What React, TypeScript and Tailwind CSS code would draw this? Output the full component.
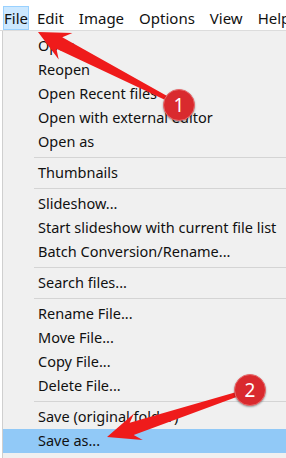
import React from "react";

type Entry = { label: string; active?: boolean } | "sep";

const entries: Entry[] = [
  { label: "Open" },
  { label: "Reopen" },
  { label: "Open Recent files" },
  { label: "Open with external editor" },
  { label: "Open as" },
  "sep",
  { label: "Thumbnails" },
  "sep",
  { label: "Slideshow..." },
  { label: "Start slideshow with current file list" },
  { label: "Batch Conversion/Rename..." },
  "sep",
  { label: "Search files..." },
  "sep",
  { label: "Rename File..." },
  { label: "Move File..." },
  { label: "Copy File..." },
  { label: "Delete File..." },
  "sep",
  { label: "Save (original folder)" },
  { label: "Save as...", active: true },
];

const topMenus = ["Edit", "Image", "Options", "View", "Help"];

// arrow: tip, tail, head length, head half width, shaft half widths
function arrowPoints(
  tip: [number, number],
  tail: [number, number],
  headLen: number,
  headHalf: number,
  neckHalf: number,
  tailHalf: number
) {
  const dx = tail[0] - tip[0];
  const dy = tail[1] - tip[1];
  const len = Math.hypot(dx, dy);
  const ux = dx / len;
  const uy = dy / len;
  const px = -uy;
  const py = ux;
  const bx = tip[0] + ux * headLen;
  const by = tip[1] + uy * headLen;
  const nx = tip[0] + ux * (headLen - 7);
  const ny = tip[1] + uy * (headLen - 7);
  const pts = [
    [tip[0], tip[1]],
    [bx + px * headHalf, by + py * headHalf],
    [nx + px * neckHalf, ny + py * neckHalf],
    [tail[0] + px * tailHalf, tail[1] + py * tailHalf],
    [tail[0] - px * tailHalf, tail[1] - py * tailHalf],
    [nx - px * neckHalf, ny - py * neckHalf],
    [bx - px * headHalf, by - py * headHalf],
  ];
  return pts.map((p) => `${p[0].toFixed(1)},${p[1].toFixed(1)}`).join(" ");
}

const Badge = ({ n }: { n: number }) => (
  <div className="w-[32px] h-[32px] rounded-full bg-[#d92a2e] border border-[#e86a6c] shadow-[0_1px_2px_rgba(0,0,0,0.35)] flex items-center justify-center text-white text-[19px] leading-none font-['Noto_Sans',sans-serif]">
    {n}
  </div>
);

export default function App() {
  return (
    <div className="relative w-[286px] h-[458px] overflow-hidden bg-white font-['Noto_Sans',sans-serif] text-[#111]">
      <div className="h-[6px] bg-white" />
      <div className="flex items-stretch h-[25px] border-b border-[#dcdcdc] text-[15px]">
        <div className="ml-[3px] w-[34px] border border-[#99d1ff] bg-[#cce8ff] flex items-center justify-center">
          File
        </div>
        <div className="flex items-center gap-[15px] pl-[8px]">
          {topMenus.map((m) => (
            <span key={m} className="whitespace-nowrap">
              {m}
            </span>
          ))}
        </div>
      </div>
      <div className="ml-[2px] border-l border-[#cfcfcf] bg-[#f0f0f0] pt-[3px] h-[427px] text-[14.5px]">
        {entries.map((e, i) =>
          e === "sep" ? (
            <div key={i} className="h-[7px] flex items-center pl-[31px]">
              <div className="h-px w-full bg-[#d4d4d4]" />
            </div>
          ) : (
            <div
              key={i}
              className={`h-[24px] flex items-center pl-[35px] whitespace-nowrap ${
                e.active ? "bg-[#91c9f7]" : ""
              }`}
            >
              {e.label}
            </div>
          )
        )}
      </div>

      <svg
        className="absolute inset-0 pointer-events-none"
        width="286"
        height="458"
        viewBox="0 0 286 458"
      >
        <polygon
          points={arrowPoints([38, 32], [172, 101], 31, 15, 6.5, 2)}
          fill="#ef1b1b"
        />
        <polygon
          points={arrowPoints([107, 437], [244, 392], 33, 14, 6.5, 2)}
          fill="#ef1b1b"
        />
      </svg>
      <div className="absolute left-[163px] top-[89px]">
        <Badge n={1} />
      </div>
      <div className="absolute left-[234px] top-[374px]">
        <Badge n={2} />
      </div>
    </div>
  );
}
